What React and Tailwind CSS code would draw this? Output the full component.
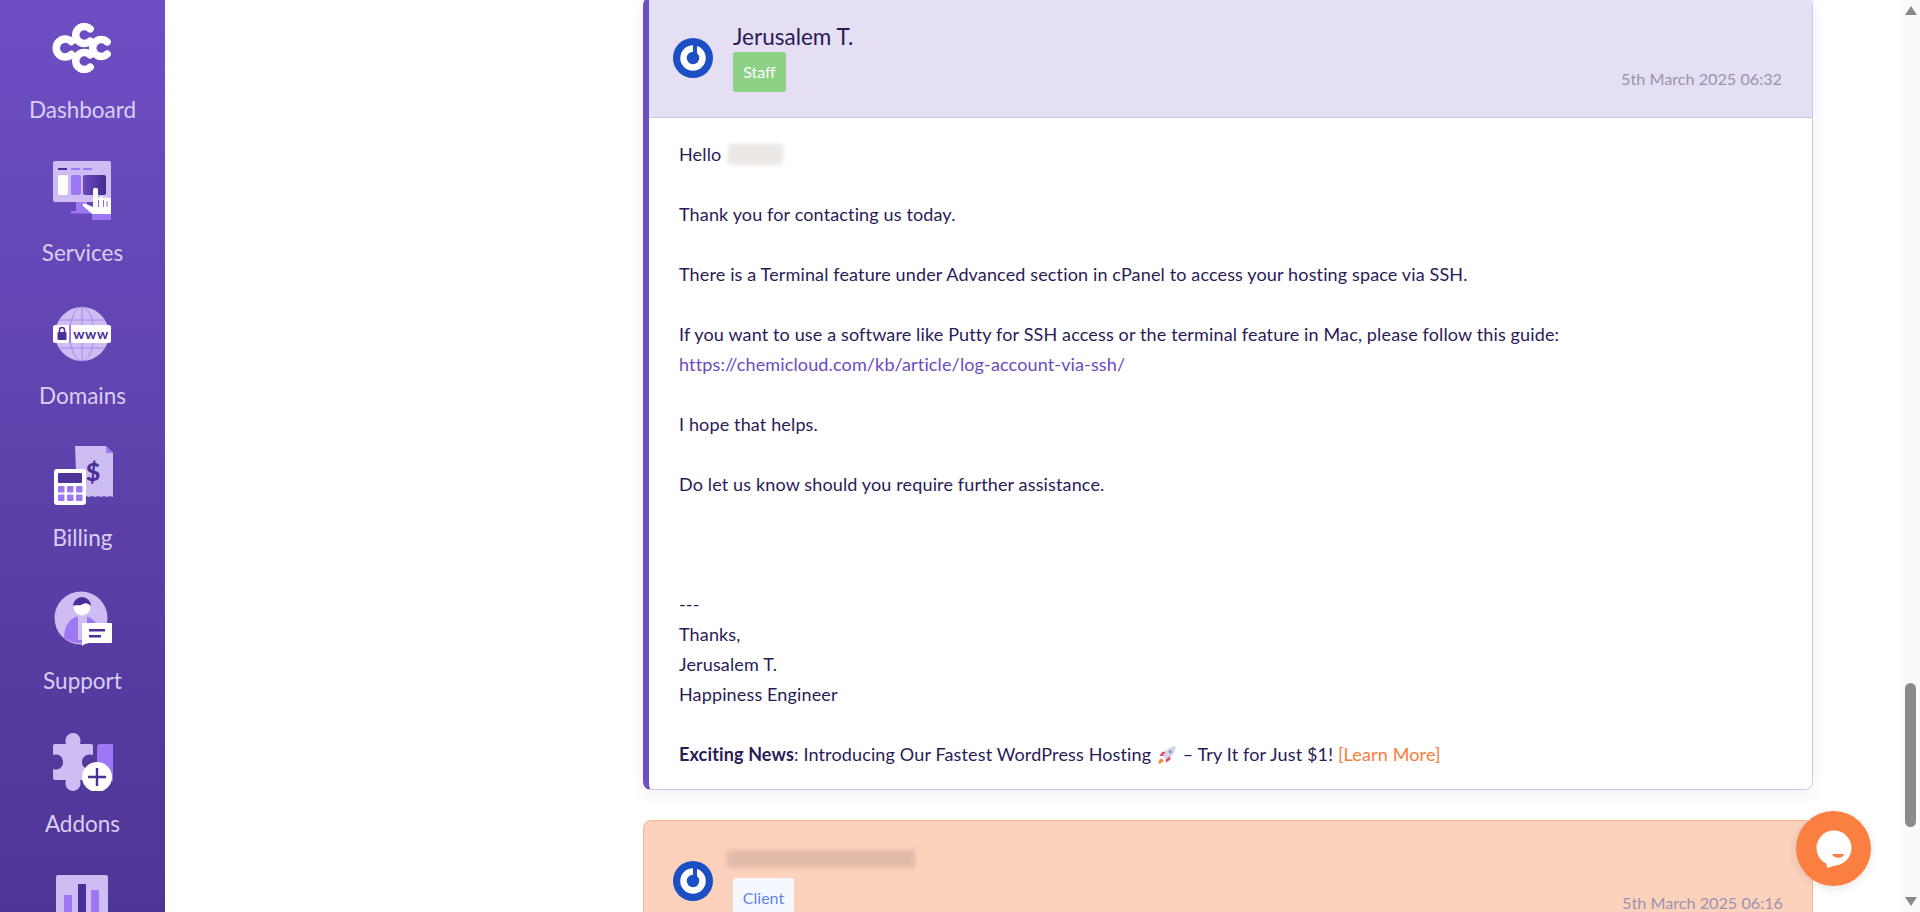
import React from "react";

function Logo() {
  const c = (cx, cy, r) => {
    const d = r * 0.72;
    return `M${cx + d} ${cy - d}A${r} ${r} 0 1 0 ${cx + d} ${cy + d}`;
  };
  return (
    <svg viewBox="0 0 60 50" className="w-[60px] h-[50px]" fill="none" stroke="#fff" strokeWidth="7.5" strokeLinecap="round">
      <path d={c(13, 25, 9)} />
      <path d={c(32, 12, 8.500)} />
      <path d={c(49, 25, 8.500)} />
      <path d={c(32, 38, 8.500)} />
    </svg>
  );
}

function ServicesIcon() {
  return (
    <svg viewBox="0 0 60 60" className="w-[60px] h-[60px]">
      <defs>
        <linearGradient id="dk1" x1="0" x2="1">
          <stop offset="0" stopColor="#6a4bc0" />
          <stop offset="1" stopColor="#432a8c" />
        </linearGradient>
      </defs>
      <path d="M24 40h11v10H24z" fill="#9d78f5" />
      <path d="M19 50h21v2.500H19z" fill="#9d78f5" />
      <rect x="1" y="0" width="58" height="41" rx="2" fill="#cdbdf3" />
      <rect x="6" y="7" width="9" height="2" fill="#4a2f98" />
      <rect x="19" y="7" width="9" height="2" fill="#9d78f5" />
      <rect x="31" y="7" width="9" height="2" fill="#9d78f5" />
      <rect x="6" y="14" width="10" height="20" rx="2" fill="#fff" />
      <rect x="19" y="14" width="10" height="20" rx="2" fill="#9d78f5" />
      <rect x="31" y="14" width="23" height="20" rx="2" fill="url(#dk1)" />
      <path d="M40 53 31 45c-1-2 1-3 3-2l7 3V29c0-3 5-3 5 0v8h2v-1c1-1 2.500-1 3 0v1h1c1-1 2.500-1 3 0h1c1-.5 3 0 3 2v14z" fill="#fff" />
      <path d="M46.500 39v7M51.500 39v7M55 40v6" stroke="#6a4bc0" strokeWidth=".8" />
      <path d="M40 53h19v6H40z" fill="#9d78f5" />
    </svg>
  );
}

function DomainsIcon() {
  return (
    <svg viewBox="0 0 60 56" className="w-[60px] h-[56px]">
      <circle cx="30" cy="28" r="27" fill="#cdbdf3" />
      <g fill="none" stroke="#a58af0" strokeWidth="1">
        <ellipse cx="30" cy="28" rx="12" ry="27" />
        <path d="M30 1v54M7 14h46M7 42h46" />
      </g>
      <rect x="1" y="19" width="58" height="18" rx="2" fill="#fff" />
      <rect x="17" y="19" width="2" height="18" fill="#9d78f5" />
      <rect x="5.500" y="26" width="9" height="8" rx="1" fill="#4a2f98" />
      <path d="M7.500 26v-2a2.500 2.500 0 0 1 5 0v2" fill="none" stroke="#4a2f98" strokeWidth="1.5" />
      <text x="39" y="32.500" textAnchor="middle" fontFamily="Lato, sans-serif" fontSize="14" fontWeight="700" fill="#4a2f98" letterSpacing="0.6">www</text>
    </svg>
  );
}

function BillingIcon() {
  return (
    <svg viewBox="0 0 60 60" className="w-[60px] h-[60px]">
      <path d="M22 0h31l7 7v44l-3-1-3 1-3-1-3 1-3-1-3 1-3-1-3 1-3-1-3 1-3-1-3 1z" fill="#cdbdf3" />
      <path d="M53 0l7 7h-7z" fill="#9d78f5" />
      <text x="40" y="35" textAnchor="middle" fontFamily="Lato, sans-serif" fontSize="25" fontWeight="900" fill="#4a2f98">$</text>
      <rect x="1" y="23" width="32" height="36" rx="3" fill="#fff" />
      <rect x="5" y="27" width="24" height="10" rx="1" fill="#4f349c" />
      {[0, 1, 2].map((i) =>
        [0, 1].map((j) => (
          <rect key={i + "-" + j} x={5 + i * 9} y={40 + j * 8.5} width="6.5" height="6.5" rx="1" fill="#9d78f5" />
        ))
      )}
    </svg>
  );
}

function SupportIcon() {
  return (
    <svg viewBox="0 0 60 56" className="w-[60px] h-[56px]">
      <circle cx="29" cy="27" r="26.500" fill="#cdbdf3" />
      <path d="M12 47c0-15 8-22 18-22s18 7 18 22c-10 7-26 7-36 0z" fill="#9d78f5" />
      <path d="M26 25h9v24h-9z" fill="#cdbdf3" />
      <circle cx="30" cy="16" r="8.500" fill="#fff" />
      <path d="M21 15a9 9 0 0 1 18 0c-4-4-6-3-9-1.500s-6 0-9 1.500z" fill="#4a2f98" />
      <path d="M30 32h29a1 1 0 0 1 1 1v18a1 1 0 0 1-1 1H34l-4 3z" fill="#fff" />
      <rect x="37" y="38" width="16" height="2.500" fill="#4a2f98" />
      <rect x="37" y="44" width="12" height="2.500" fill="#4a2f98" />
    </svg>
  );
}

function AddonsIcon() {
  return (
    <svg viewBox="0 0 60 58" className="w-[60px] h-[58px]">
      <path d="M44 35V14a3 3 0 0 1 3-3h13v37H44z" fill="#9d78f5" />
      <path d="M2 11h11c-2-6 2-11 7-11s9 5 7 11h11a2 2 0 0 1 2 2v9c-6-2-11 2-11 7s5 9 11 7v9a2 2 0 0 1-2 2H27c2 6-2 11-7 11s-9-5-7-11H2a2 2 0 0 1-2-2v-9c5 2 10-1 10-7s-5-9-10-7v-9a2 2 0 0 1 2-2z" fill="#cdbdf3" />
      <circle cx="44" cy="44" r="15" fill="#fff" />
      <path d="M44 35v18M35 44h18" stroke="#4a2f98" strokeWidth="2.400" />
    </svg>
  );
}

function ReportsIcon() {
  return (
    <svg viewBox="0 0 60 60" className="w-[60px] h-[60px]">
      <rect x="3" y="0" width="52" height="60" rx="2" fill="#cdbdf3" />
      <rect x="11" y="20" width="8" height="30" fill="#9d78f5" />
      <rect x="25" y="9" width="8" height="40" fill="#4a2f98" />
      <rect x="38" y="15" width="8" height="35" fill="#9d78f5" />
    </svg>
  );
}

const navItems = [
  { label: "Dashboard", icon: <Logo /> },
  { label: "Services", icon: <ServicesIcon /> },
  { label: "Domains", icon: <DomainsIcon /> },
  { label: "Billing", icon: <BillingIcon /> },
  { label: "Support", icon: <SupportIcon /> },
  { label: "Addons", icon: <AddonsIcon /> },
  { label: "", icon: <ReportsIcon /> },
];

function Avatar() {
  return (
    <svg viewBox="0 0 40 40" className="w-10 h-10 shrink-0">
      <circle cx="20" cy="20" r="20" fill="#1d4fc4" />
      <circle cx="20" cy="20" r="9.500" fill="none" stroke="#fff" strokeWidth="6.500" />
      <path d="M22 6v13" stroke="#1d4fc4" strokeWidth="4" strokeLinecap="round" />
    </svg>
  );
}

function Rocket() {
  return (
    <svg viewBox="0 0 20 20" className="inline-block w-[22px] h-[22px] align-[-5px]">
      <path d="M18 2c-4 0-8 2-10 6l-2 3 3 3 3-2c4-2 6-6 6-10z" fill="#d9d6e6" />
      <path d="M6 11 3 11l3-4h3zM9 14v3l4-3v-3z" fill="#e0457b" />
      <circle cx="13" cy="7" r="1.600" fill="#7aa4d8" />
      <path d="M5 13c-2 1-2.500 3-3 5 2-.5 4-1 5-3z" fill="#f08a3c" />
    </svg>
  );
}

export default function App() {
  return (
    <div className="flex h-[912px] overflow-hidden bg-white font-[Lato,sans-serif] text-[#2a1b57]">
      <aside className="w-[165px] shrink-0 h-full overflow-hidden bg-gradient-to-b from-[#6d4fc4] to-[#4e3595]">
        <div className="flex flex-col items-center pt-[18px] gap-[36.8px]">
          {navItems.map((item, i) => (
            <div key={i} className="flex flex-col items-center">
              <div className="h-[60px] flex items-center justify-center">{item.icon}</div>
              {item.label && (
                <div className="mt-[18px] h-[28px] leading-[28px] text-[22.5px] text-[#d9cff3]">{item.label}</div>
              )}
            </div>
          ))}
        </div>
      </aside>

      <main className="flex-1 min-w-0 pl-[478px] pr-[88px] -mt-[3px]">
        <section className="rounded-lg border-r border-b border-[#cdc7e6] border-l-[6px] border-l-[#6f4fc4] shadow-[0_4px_16px_rgba(60,40,120,0.07)] overflow-hidden">
          <header className="h-[121px] bg-[#e5dff4] border-b border-[#cfc8e8] flex pl-[24px] pr-[30px]">
            <div className="flex items-center mt-[1px]"><Avatar /></div>
            <div className="ml-[20px] pt-[26px]">
              <div className="text-[22.5px] leading-[28px]">Jerusalem T.</div>
              <div className="mt-[1px] w-[53px] h-[40px] rounded-[3px] bg-[#8dd187] text-white text-[16px] flex items-center justify-center">Staff</div>
            </div>
            <div className="ml-auto self-end pb-[27px] text-[16.2px] leading-[22px] text-[#9a92ae]">5th March 2025 06:32</div>
          </header>
          <div className="bg-white pl-[30px] pr-[30px] pt-[21px] pb-[20px] text-[18px] tracking-[0.14px] leading-[30px]">
            <div className="flex items-center">
              Hello <span className="ml-[7px] w-[55px] h-[21px] bg-[#ebe8e6] blur-[2px]" />
            </div>
            <br />
            <div>Thank you for contacting us today.</div>
            <br />
            <div>There is a Terminal feature under Advanced section in cPanel to access your hosting space via SSH.</div>
            <br />
            <div>If you want to use a software like Putty for SSH access or the terminal feature in Mac, please follow this guide:</div>
            <div className="text-[#6a4bc0]">https://chemicloud.com/kb/article/log-account-via-ssh/</div>
            <br />
            <div>I hope that helps.</div>
            <br />
            <div>Do let us know should you require further assistance.</div>
            <br />
            <br />
            <br />
            <div>---</div>
            <div>Thanks,</div>
            <div>Jerusalem T.</div>
            <div>Happiness Engineer</div>
            <br />
            <div>
              <b className="font-bold">Exciting News</b>: Introducing Our Fastest WordPress Hosting <Rocket /> – Try It for Just $1!{" "}
              <span className="text-[#f97c3c]">[Learn More]</span>
            </div>
          </div>
        </section>

        <section className="mt-[30px] rounded-t-lg border border-[#ffb58f] bg-[#fcd2bd] h-[200px] flex pl-[29px] pr-[29px]">
          <div className="mt-[40px]"><Avatar /></div>
          <div className="ml-[14px] pt-[29px]">
            <div className="w-[188px] h-[18px] bg-[#e2baa9] blur-[2px]" />
            <div className="ml-[6px] mt-[10px] w-[61px] h-[40px] rounded-[3px] bg-[#f5f8ff] text-[#5b85e8] text-[16px] flex items-center justify-center">Client</div>
          </div>
          <div className="ml-auto pt-[71px] text-[16.2px] leading-[22px] text-[#9a92ae]">5th March 2025 06:16</div>
        </section>
      </main>

      <div className="w-[19px] shrink-0 h-full bg-[#fafafa] flex flex-col items-center justify-between py-[6px]">
        <div className="w-0 h-0 border-x-[6px] border-x-transparent border-b-[9px] border-b-[#8a8a8a]" />
        <div className="flex-1 flex flex-col justify-end pb-[70px] w-full items-center">
          <div className="w-[11px] h-[144px] rounded-full bg-[#8a8a8a]" />
        </div>
        <div className="w-0 h-0 border-x-[6px] border-x-transparent border-t-[9px] border-t-[#8a8a8a]" />
      </div>

      <button className="fixed right-[49px] bottom-[26px] w-[75px] h-[75px] rounded-full bg-[#fa7f41] shadow-[0_2px_8px_rgba(0,0,0,0.12)] flex items-center justify-center">
        <svg viewBox="0 0 36 40" className="w-[36px] h-[40px] mt-[2px]">
          <circle cx="18" cy="18" r="17.500" fill="#fff" />
          <path d="M10 30 11 38 24 34z" fill="#fff" />
          <path d="M16 24h12c-1 5-10 5-12 0z" fill="#fa7f41" />
        </svg>
      </button>
    </div>
  );
}
